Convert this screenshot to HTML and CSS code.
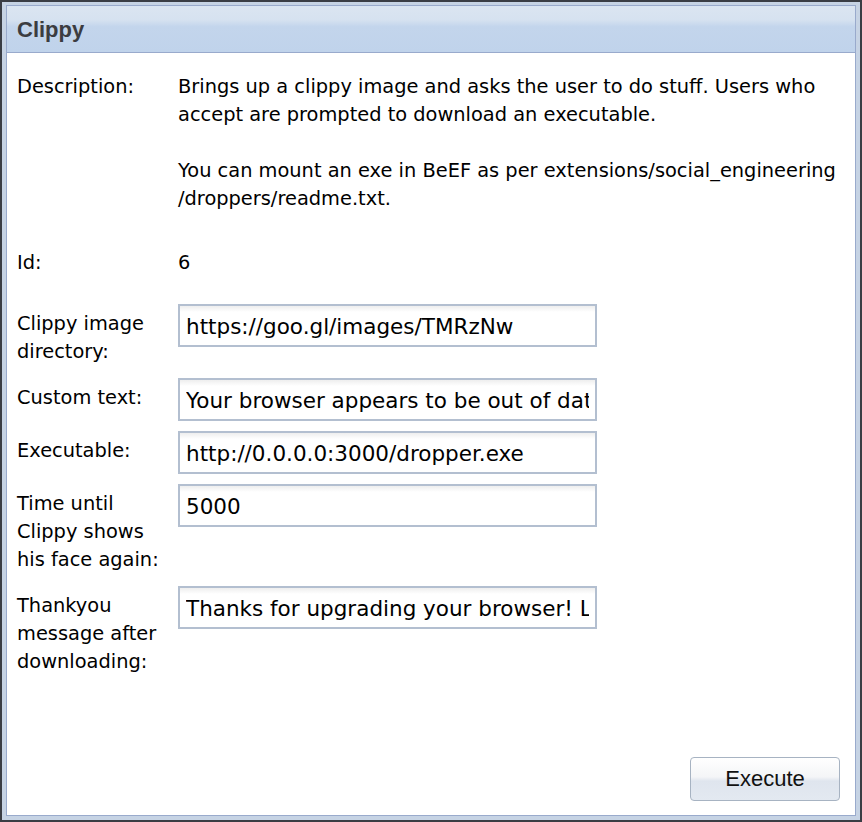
FILE: index.html
```html
<!DOCTYPE html>
<html>
<head>
<meta charset="utf-8">
<link rel="stylesheet" href="styles.css">
</head>
<body>
<div class="frame">
  <div class="panel">
    <div class="header"><span class="title">Clippy</span></div>
    <div class="body">
      <div class="row desc-row">
        <div class="label">Description:</div>
        <div class="value">Brings up a clippy image and asks the user to do stuff. Users who accept are prompted to download an executable.<br><br>You can mount an exe in BeEF as per extensions/social_engineering /droppers/readme.txt.</div>
      </div>
      <div class="row id-row">
        <div class="label">Id:</div>
        <div class="value">6</div>
      </div>
      <div class="row field">
        <div class="label">Clippy image directory:</div>
        <input class="input" type="text" value="https://goo.gl/images/TMRzNw">
      </div>
      <div class="row field">
        <div class="label">Custom text:</div>
        <input class="input" type="text" value="Your browser appears to be out of date. Would you like to upgrade it?">
      </div>
      <div class="row field">
        <div class="label">Executable:</div>
        <input class="input" type="text" value="http://0.0.0.0:3000/dropper.exe">
      </div>
      <div class="row field">
        <div class="label">Time until Clippy shows his face again:</div>
        <input class="input" type="text" value="5000">
      </div>
      <div class="row field">
        <div class="label">Thankyou message after downloading:</div>
        <input class="input" type="text" value="Thanks for upgrading your browser! Look forward to a safer, faster web!">
      </div>
      <div class="spacer"></div>
      <div class="footer">
        <button class="btn" type="button">Execute</button>
      </div>
    </div>
  </div>
</div>
</body>
</html>
```
FILE: styles.css
```css
html, body {
  margin: 0;
  padding: 0;
  background: #ffffff;
}
body {
  width: 862px;
  height: 822px;
  overflow: hidden;
  font-family: "DejaVu Sans", Verdana, sans-serif;
  color: #000;
}
.frame {
  box-sizing: border-box;
  width: 862px;
  height: 822px;
  border: 2px solid #3a3d44;
  background: #c6d3e4;
  padding: 3px 4px 4px 4px;
}
.panel {
  box-sizing: border-box;
  height: 100%;
  border: 1px solid #99aacc;
  background: #fff;
  display: flex;
  flex-direction: column;
}
.header {
  height: 47px;
  box-sizing: border-box;
  border-bottom: 1px solid #99aacc;
  background: linear-gradient(#dbe5f1 0%, #d6e2f0 30%, #c3d5ec 45%, #c0d3eb 100%);
  display: flex;
  align-items: center;
  padding-left: 10px;
}
.title {
  font-family: "Liberation Sans", Arial, sans-serif;
  font-weight: bold;
  font-size: 22px;
  color: #3b3c40;
  padding-top: 2px;
}
.body {
  flex: 1;
  display: flex;
  flex-direction: column;
  padding: 20px 10px 14px 10px;
  font-size: 19.4px;
  line-height: 28px;
}
.row {
  display: flex;
  align-items: flex-start;
}
.label {
  width: 161px;
  flex: none;
  box-sizing: border-box;
  padding-right: 14px;
}
.value {
  flex: 1;
}
.desc-row {
  margin-bottom: 36px;
}
.id-row {
  margin-bottom: 27px;
}
.field {
  margin-bottom: 10px;
}
.field .label {
  padding-top: 6px;
  padding-bottom: 2px;
  line-height: 28px;
}
.input {
  box-sizing: border-box;
  width: 419px;
  height: 43px;
  margin: 0;
  border: 2px solid #b3bfd0;
  background: linear-gradient(#eeeeee 0, #ffffff 6px);
  font-family: "DejaVu Sans", Verdana, sans-serif;
  font-size: 21.5px;
  color: #000;
  padding: 2px 6px 0 6px;
  outline: none;
}
.spacer {
  flex: 1;
}
.footer {
  display: flex;
  justify-content: flex-end;
  padding-right: 5px;
}
.btn {
  width: 150px;
  height: 44px;
  border: 1px solid #a7b3c2;
  border-radius: 4px;
  background: linear-gradient(#ffffff 0%, #f4f5f7 45%, #dfe5ee 55%, #e3e9f1 100%);
  font-family: "Liberation Sans", Arial, sans-serif;
  font-size: 22px;
  color: #111;
  padding: 0;
}
```
